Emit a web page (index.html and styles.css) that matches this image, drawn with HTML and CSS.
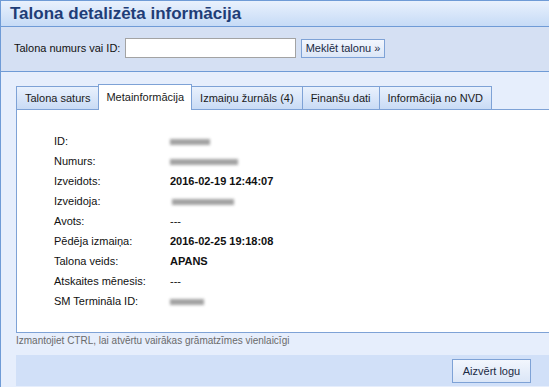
FILE: index.html
```html
<!DOCTYPE html>
<html>
<head>
<meta charset="utf-8">
<link rel="stylesheet" href="styles.css">
</head>
<body>
<div class="win">
  <div class="hdr"><h1>Talona detalizēta informācija</h1></div>
  <div class="search">
    <label>Talona numurs vai ID:</label>
    <input type="text" class="inp">
    <button class="btn">Meklēt talonu »</button>
  </div>
  <div class="main">
    <div class="tabs">
      <div class="tab">Talona saturs</div>
      <div class="tab active">Metainformācija</div>
      <div class="tab">Izmaiņu žurnāls (4)</div>
      <div class="tab">Finanšu dati</div>
      <div class="tab">Informācija no NVD</div>
    </div>
    <div class="panel">
      <div class="grid">
        <div class="k">ID:</div><div class="v"><span class="blur w1"></span></div>
        <div class="k">Numurs:</div><div class="v"><span class="blur w2"></span></div>
        <div class="k">Izveidots:</div><div class="v b">2016-02-19 12:44:07</div>
        <div class="k">Izveidoja:</div><div class="v"><span class="blur w3"></span></div>
        <div class="k">Avots:</div><div class="v">---</div>
        <div class="k">Pēdēja izmaiņa:</div><div class="v b">2016-02-25 19:18:08</div>
        <div class="k">Talona veids:</div><div class="v b">APANS</div>
        <div class="k">Atskaites mēnesis:</div><div class="v">---</div>
        <div class="k">SM Termināla ID:</div><div class="v"><span class="blur w4"></span></div>
      </div>
    </div>
    <div class="note">Izmantojiet CTRL, lai atvērtu vairākas grāmatzīmes vienlaicīgi</div>
    <div class="foot">
      <button class="btn close">Aizvērt logu</button>
    </div>
  </div>
</div>
</body>
</html>
```
FILE: styles.css
```css
html, body { margin: 0; padding: 0; overflow: hidden; }
body { width: 549px; height: 387px; background: #e6eefc; font-family: "Liberation Sans", Arial, sans-serif; font-size: 11px; color: #111; }
.win { width: 549px; height: 387px; overflow: hidden; border-left: 1px solid #6f9bd6; border-top: 1px solid #6f9bd6; box-sizing: border-box; background: #e6eefc; }
.hdr { height: 26px; border-bottom: 1px solid #6f9bd6; background: linear-gradient(#e9f1fd, #c6dbf6); box-sizing: border-box; padding-left: 9px; }
.hdr h1 { margin: 0; font-family: "Liberation Sans", Arial, sans-serif; font-size: 17px; font-weight: bold; color: #1f3d77; line-height: 25px; }
.search { height: 45px; background: #d5e0f3; border-bottom: 1px solid #6f9bd6; box-sizing: border-box; display: flex; align-items: center; padding: 0 0 2px 13px; }
.search label { width: 111px; }
.inp { width: 171px; height: 20px; box-sizing: border-box; border: 1px solid #a3a3a3; background: #fff; margin: 0 5px 0 0; padding: 0; }
.btn { font-family: "Liberation Sans", Arial, sans-serif; font-size: 11px; color: #1a2a44; height: 19px; width: 84px; padding: 0; border: 1px solid #7ea2d6; background: linear-gradient(#f2f6fd, #dbe6f7); box-sizing: border-box; margin: 0; }
.main { padding: 11px 0 0 15px; }
.tabs { display: flex; align-items: flex-end; height: 26px; }
.tab { height: 23px; box-sizing: border-box; padding: 0 8px; line-height: 22px; border: 1px solid #7ea2d6; border-bottom: none; border-right: none; background: linear-gradient(#e9f1fd, #c9dbf5); color: #1a1a1a; }
.tab:last-child { border-right: 1px solid #7ea2d6; }
.tab.active { height: 26px; background: #fff; border-right: 1px solid #7ea2d6; line-height: 24px; position: relative; top: 1px; padding: 0 7px; }
.tab.active + .tab { border-left: none; }
.panel { background: #fff; border: 1px solid #7ea2d6; border-right: none; height: 224px; box-sizing: border-box; padding: 21px 0 0 37px; }
.grid { display: grid; grid-template-columns: 116px auto; grid-auto-rows: 20px; align-items: center; }
.v.b { font-weight: bold; }
.blur { display: inline-block; height: 6px; background: #8a8a8a; filter: blur(1.6px); opacity: 0.8; vertical-align: middle; }
.w1 { width: 40px; }
.w2 { width: 68px; }
.w3 { width: 62px; margin-left: 2px; }
.w4 { width: 34px; }
.note { font-size: 10px; color: #6a6a6a; height: 22px; line-height: 16px; }
.foot { height: 31px; background: #d1e0f8; display: flex; align-items: center; padding-left: 436px; }
.close { height: 24px; width: 79px; }
```
